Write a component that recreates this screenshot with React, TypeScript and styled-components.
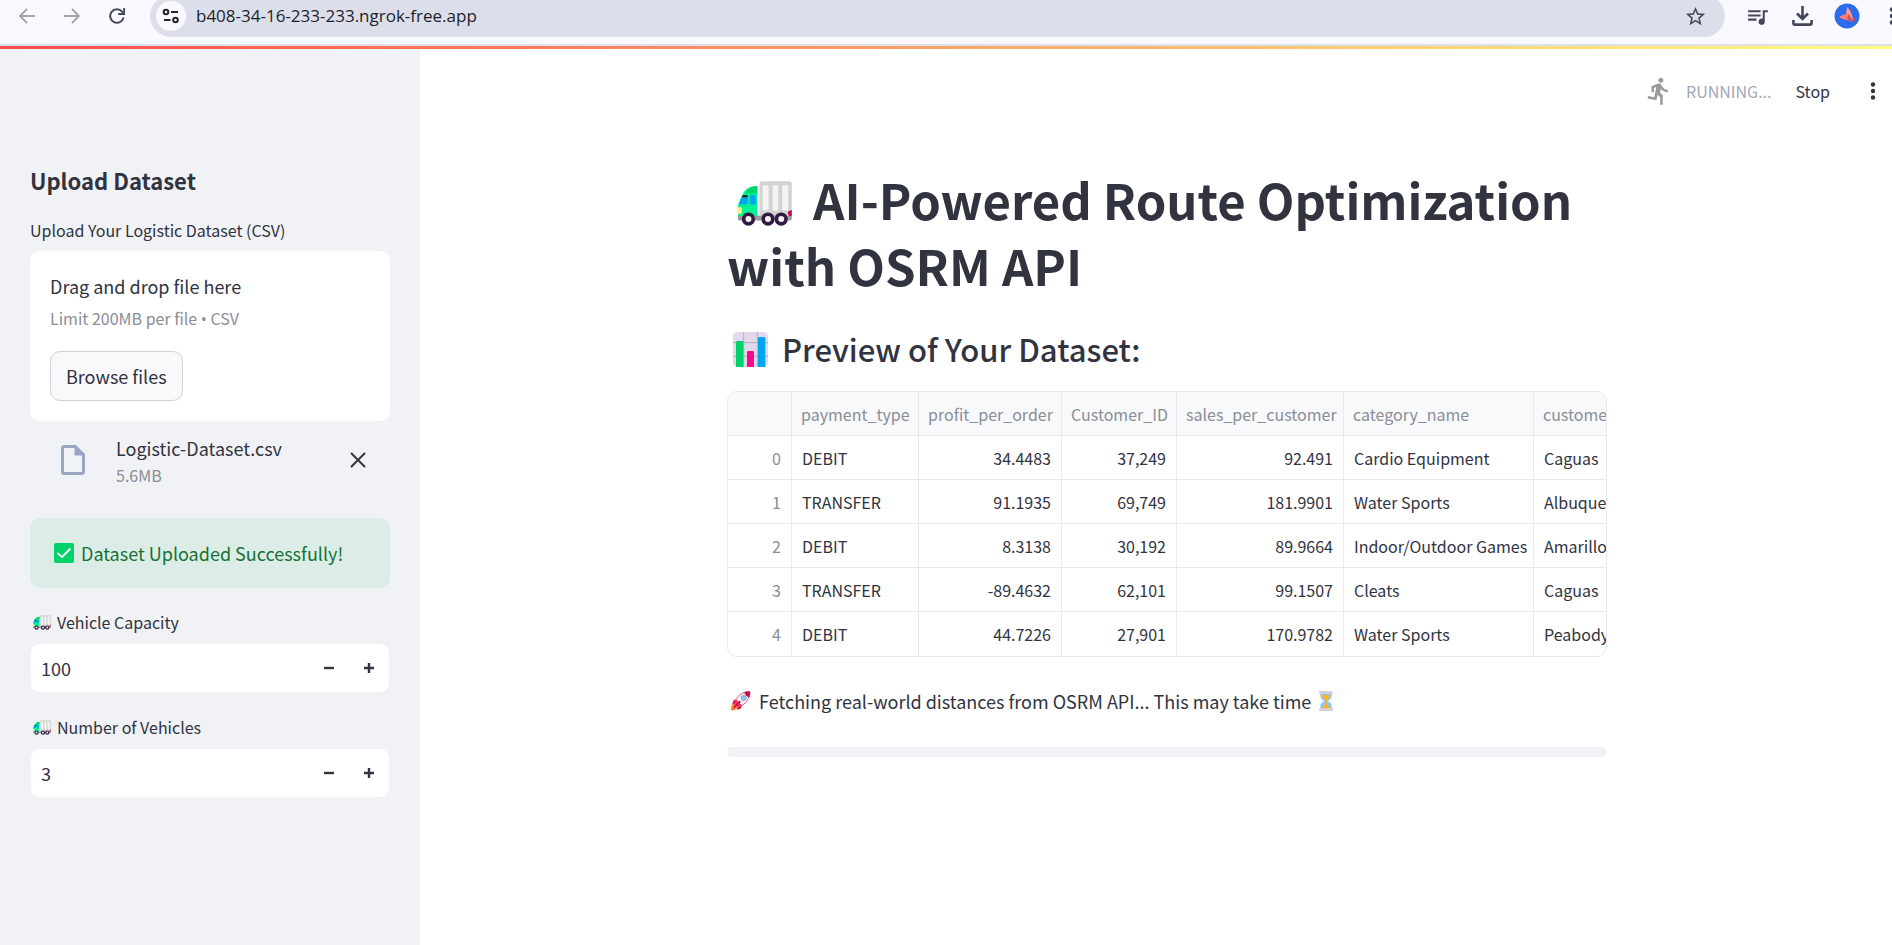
import React, { useState } from "react";
import styled, { createGlobalStyle } from "styled-components";
import { MdDirectionsRun, MdQueueMusic, MdStarBorder, MdOutlineInsertDriveFile } from "react-icons/md";

const ink = "#31333f";
const muted = "#8b8d97";
const line = "#e8e9eb";

const GlobalStyle = createGlobalStyle`
  *, *::before, *::after { box-sizing: border-box; }
  body {
    margin: 0;
    background: #fff;
    color: ${ink};
    font-family: "Noto Sans CJK SC", "Open Sans", sans-serif;
    font-size: 18px;
    line-height: 30px;
  }
  button, input { font: inherit; color: inherit; }
  button { background: none; border: 0; padding: 0; cursor: pointer; }
  svg { display: block; flex: none; }
`;

const Page = styled.div`
  display: flex;
  flex-direction: column;
  min-height: 100vh;
  overflow: hidden;
`;

/* Browser chrome */

const BrowserBar = styled.header`
  display: flex;
  align-items: flex-end;
  height: 46px;
  padding: 0 0 7px 11px;
  overflow: hidden;
  background: #f9f9ff;
  border-bottom: 2px solid #dfe1ea;
`;

const NavButtons = styled.nav`
  display: flex;
  gap: 13px;
  margin-right: 17px;
`;

const BarButton = styled.button<{ $color?: string }>`
  display: flex;
  align-items: center;
  justify-content: center;
  width: 32px;
  height: 42px;
  color: ${(p) => p.$color ?? "#434759"};
`;

const AddressBar = styled.div`
  display: flex;
  flex: 1;
  align-items: center;
  height: 42px;
  padding: 0 14px 0 6px;
  border-radius: 21px;
  background: #dcdee9;
`;

const SiteInfo = styled.button`
  display: flex;
  align-items: center;
  justify-content: center;
  width: 30px;
  height: 30px;
  border-radius: 50%;
  background: #f9f9ff;
`;

const AddressInput = styled.input`
  flex: 1;
  min-width: 0;
  margin-left: 10px;
  padding: 0;
  border: 0;
  outline: 0;
  background: transparent;
  color: #1d1f2b;
  font-family: "Open Sans", sans-serif;
  font-size: 17px;
`;

const BarActions = styled.div`
  display: flex;
  gap: 13px;
  margin: 0 -16px 0 16px;
`;

const RunStripe = styled.div`
  height: 3px;
  background: linear-gradient(90deg, #ff4b4b, #fffd80);
`;

/* App frame */

const Body = styled.div`
  display: flex;
  flex: 1;
`;

const Sidebar = styled.aside`
  flex: none;
  width: 420px;
  padding: 116px 30px 40px;
  background: #f0f2f6;
`;

const Main = styled.main`
  flex: 1;
  min-width: 0;
`;

const Toolbar = styled.div`
  display: flex;
  align-items: center;
  justify-content: flex-end;
  height: 83px;
  padding-right: 4px;
  font-size: 16px;
`;

const Status = styled.span`
  margin: 0 24px 0 12px;
  color: #a3a8b8;
`;

const MenuButton = styled.button`
  display: flex;
  align-items: center;
  justify-content: center;
  width: 30px;
  height: 30px;
  margin-left: 28px;
`;

const Content = styled.div`
  width: 100%;
  max-width: 902px;
  margin: 0 auto;
  padding: 34px 0 60px 22px;
`;

/* Sidebar parts */

const SideHeading = styled.h2`
  margin: 0 0 23px;
  font-size: 22px;
  font-weight: 600;
  line-height: 30px;
`;

const Label = styled.label`
  display: flex;
  align-items: center;
  gap: 6px;
  margin-bottom: 9px;
  font-size: 16px;
  line-height: 24px;
`;

const TruckLabel = styled(Label)`
  padding-left: 3px;
`;

const DropZone = styled.section`
  padding: 20px;
  border-radius: 10px;
  background: #fff;
`;

const Small = styled.div`
  color: ${muted};
  font-size: 16px;
  line-height: 24px;
`;

const LimitNote = styled(Small)`
  margin: 5px 0 20px;
`;

const Bullet = styled.span`
  font-family: "Open Sans", sans-serif;
`;

const BrowseButton = styled.button`
  height: 50px;
  padding: 0 15px;
  border: 1px solid #d0d1d6;
  border-radius: 10px;
  background: #f9f9fb;
`;

const FileRow = styled.div`
  display: flex;
  align-items: center;
  gap: 25px;
  margin: 12px 0 31px;
  padding: 0 17px 0 25px;
  color: #98a6c4;
`;

const FileInfo = styled.div`
  flex: 1;
  color: ${ink};
`;

const RemoveButton = styled.button`
  display: flex;
  align-items: center;
  justify-content: center;
  width: 30px;
  height: 30px;
  color: ${ink};
`;

const Success = styled.div`
  display: flex;
  align-items: center;
  gap: 7px;
  height: 70px;
  margin-bottom: 22px;
  padding: 0 24px;
  border-radius: 10px;
  background: #dcede7;
  color: #177233;
`;

const NumberBox = styled.div`
  display: flex;
  align-items: center;
  height: 50px;
  margin-bottom: 22px;
  padding-left: 10px;
  border: 1px solid #f0f2f6;
  border-radius: 10px;
  background: #fff;
`;

const NumberField = styled.input`
  flex: 1;
  min-width: 0;
  padding: 0;
  border: 0;
  outline: 0;
  background: transparent;
`;

const StepButton = styled.button`
  display: flex;
  align-items: center;
  justify-content: center;
  width: 40px;
  height: 48px;
`;

/* Main parts */

const Title = styled.h1`
  margin: 0 0 31px;
  font-size: 49px;
  font-weight: 700;
  line-height: 66px;
  svg { display: inline-block; margin: 0 9px 0 10px; vertical-align: -6px; }
`;

const Subtitle = styled.h3`
  display: flex;
  align-items: center;
  gap: 14px;
  margin: 0 0 22px;
  padding-left: 6px;
  font-size: 31px;
  font-weight: 500;
  line-height: 40px;
`;

const TableFrame = styled.div`
  overflow: hidden;
  border: 1px solid ${line};
  border-radius: 10px;
`;

const DataTable = styled.table`
  width: 1010px;
  table-layout: fixed;
  border-collapse: separate;
  border-spacing: 0;
  font-size: 16px;
  line-height: 24px;
`;

const Col = styled.col<{ $w: number }>`
  width: ${(p) => p.$w}px;
`;

const HeadCell = styled.th`
  height: 44px;
  padding: 0 9px;
  border-right: 1px solid ${line};
  border-bottom: 1px solid ${line};
  background: #f8f9fb;
  color: ${muted};
  font-weight: 400;
  text-align: left;
  white-space: nowrap;
`;

const Cell = styled.td<{ $right?: boolean; $muted?: boolean }>`
  height: 44px;
  padding: 0 10px;
  border-right: 1px solid ${line};
  border-bottom: 1px solid ${line};
  color: ${(p) => (p.$muted ? muted : ink)};
  text-align: ${(p) => (p.$right ? "right" : "left")};
  white-space: nowrap;
  tr:last-child > & { border-bottom: 0; }
`;

const Notice = styled.p`
  display: flex;
  align-items: center;
  gap: 8px;
  margin: 29px 0 31px;
  padding-left: 3px;
`;

const Progress = styled.div`
  height: 10px;
  border-radius: 5px;
  background: #f0f2f6;
`;

/* Drawings */

const Truck = ({ width, height }: { width: number; height: number }) => (
  <svg width={width} height={height} viewBox="80 62 166 136" aria-hidden="true">
    <rect x="146" y="63" width="98" height="113" rx="9" fill="#d3d3d3" />
    <rect x="156" y="75" width="18" height="76" rx="4" fill="#f4f4f4" />
    <rect x="186" y="75" width="17" height="76" rx="4" fill="#f4f4f4" />
    <rect x="215" y="75" width="18" height="76" rx="4" fill="#f4f4f4" />
    <path d="M81 167H244V175Q244 181 238 181H86Q81 181 81 176Z" fill="#9b9b9b" />
    <path d="M81 168V136L94 104Q106 78 134 78H140V168Z" fill="#00f397" />
    <path d="M104 99Q114 77 140 77V99Z" fill="#00d26a" />
    <path d="M83 133L94 108Q96 104 101 104H111V128Q111 133 106 133Z" fill="#00a6ed" />
    <path d="M93 111L97 104H110V111Z" fill="#212121" />
    <rect x="117" y="104" width="18" height="29" rx="4" fill="#00a6ed" />
    <path d="M81 141H89Q93 141 93 145V157Q93 161 89 161H81Z" fill="#fff478" />
    <path d="M244 150V168H238Q232 166 232 159T244 150Z" fill="#ca0b4a" />
    {[113, 172, 212].map((x) => (
      <g key={x}>
        <circle cx={x} cy="177" r="20" fill="#321b41" />
        <circle cx={x} cy="177" r="9" fill="#f4f4f4" />
      </g>
    ))}
  </svg>
);

const BarChart = () => (
  <svg width="35" height="35" viewBox="69 519 105 105" aria-hidden="true">
    <rect x="69" y="519" width="105" height="105" rx="14" fill="#e1d8ec" />
    <path d="M101 519V624M142 519V624M69 551H174M69 592H174" stroke="#b4acbc" strokeWidth="3" />
    <path d="M78 624V550Q78 546 82 546H96Q100 546 100 550V624Z" fill="#00d26a" />
    <path d="M111 624V580Q111 576 115 576H128Q132 576 132 580V624Z" fill="#f70a8d" />
    <path d="M144 624V538Q144 534 148 534H162Q166 534 166 538V624Z" fill="#00a6ed" />
  </svg>
);

const Rocket = () => (
  <svg width="21" height="20" viewBox="0 0 32 32" aria-hidden="true">
    <path d="M1 31Q0 22 6 20L12 26Q10 31 1 31Z" fill="#ff822d" />
    <path d="M9 13Q3 14 3 22L9 19ZM18 23Q18 29 10 30L13 23Z" fill="#ca0b4a" />
    <path d="M8 23Q5 11 20 3Q26 0 31 1Q32 7 28 13Q20 27 9 24Z" fill="#f4f4f4" stroke="#e05575" strokeWidth="1.5" />
    <path d="M22 2Q27 0 31 1Q32 5 30 10Q24 9 22 2Z" fill="#ca0b4a" />
    <path d="M7 24Q5 18 9 14L12 16Q12 19 17 21L18 23Q13 26 7 24Z" fill="#f92f60" />
    <path d="M6 26L15 17" stroke="#ca0b4a" strokeWidth="2.5" strokeLinecap="round" />
    <circle cx="21" cy="11" r="4" fill="#83cbff" stroke="#9b9b9b" strokeWidth="1.5" />
  </svg>
);

const Hourglass = () => (
  <svg width="14" height="20" viewBox="0 0 21 30" aria-hidden="true">
    <path d="M2 3H19V7Q19 12 13 15Q19 18 19 23V27H2V23Q2 18 8 15Q2 12 2 7Z" fill="#83cbff" />
    <path d="M4 6H17Q17 11 12 13V20Q16 23 17 27H4Q5 23 9 20V13Q4 11 4 6Z" fill="#ffb02e" />
    <rect x="0" y="0" width="21" height="4" rx="1" fill="#d3d3d3" />
    <rect x="0" y="26" width="21" height="4" rx="1" fill="#d3d3d3" />
  </svg>
);

const CheckMark = () => (
  <svg width="20" height="20" viewBox="0 0 20 20" aria-hidden="true">
    <rect width="20" height="20" rx="2" fill="#00d26a" />
    <path d="M4 10.5L8 14L16 6" fill="none" stroke="#f4f4f4" strokeWidth="2" strokeLinecap="round" strokeLinejoin="round" />
  </svg>
);

const Arrow = ({ flip }: { flip?: boolean }) => (
  <svg width="16" height="16" viewBox="0 0 16 16" aria-hidden="true">
    <path
      d={flip ? "M0 8H15M8 1L15 8L8 15" : "M16 8H1M8 1L1 8L8 15"}
      fill="none"
      stroke="currentColor"
      strokeWidth="1.8"
    />
  </svg>
);

const Reload = () => (
  <svg width="16" height="16" viewBox="0 0 16 16" aria-hidden="true">
    <path d="M14.6 9.5A6.8 6.8 0 1 1 13.2 3.6L14.6 5" fill="none" stroke="currentColor" strokeWidth="2" />
    <path d="M15.2 0V6H9.2" fill="none" stroke="currentColor" strokeWidth="2" />
  </svg>
);

const SiteSettings = () => (
  <svg width="18" height="16" viewBox="0 0 18 16" fill="none" stroke="#23242c" strokeWidth="2" aria-hidden="true">
    <circle cx="4" cy="4" r="2.3" />
    <path d="M9 4H16M2 12H8.5" />
    <circle cx="13.5" cy="12" r="2.3" />
  </svg>
);

const Download = () => (
  <svg width="21" height="20" viewBox="0 0 21 20" fill="none" stroke="currentColor" strokeWidth="2.6" aria-hidden="true">
    <path d="M10.5 0V13M5 7.5L10.5 13L16 7.5M1.4 14V17Q1.4 18.6 3 18.6H18Q19.6 18.6 19.6 17V14" />
  </svg>
);

const Avatar = () => (
  <svg width="26" height="26" viewBox="0 0 26 26" aria-hidden="true">
    <circle cx="13" cy="13" r="12.5" fill="#2c6bee" />
    <path d="M13 4Q18 8 19 17L12 12Z" fill="#ff9a85" />
    <path d="M5 14Q9 11 15 11L17 18L13 17Q9 17 5 14Z" fill="#ff7d6e" />
    <path d="M15 11L18 17L20 14L21 17L18 19L13 16Z" fill="#d9505c" />
  </svg>
);

const Dots = () => (
  <svg width="6" height="18" viewBox="0 0 6 18" fill="currentColor" aria-hidden="true">
    <circle cx="3" cy="2.5" r="2.2" />
    <circle cx="3" cy="9" r="2.2" />
    <circle cx="3" cy="15.5" r="2.2" />
  </svg>
);

const Cross = () => (
  <svg width="16" height="16" viewBox="0 0 16 16" aria-hidden="true">
    <path d="M1.5 1.5L14.5 14.5M14.5 1.5L1.5 14.5" stroke="currentColor" strokeWidth="1.9" strokeLinecap="round" />
  </svg>
);

const StepSign = ({ plus }: { plus?: boolean }) => (
  <svg width="10" height="10" viewBox="0 0 10 10" aria-hidden="true">
    <path d={plus ? "M0 5H10M5 0V10" : "M0 5H10"} stroke="currentColor" strokeWidth="2.4" />
  </svg>
);

/* Content */

const columns = [
  { name: "", width: 64, right: true },
  { name: "payment_type", width: 127 },
  { name: "profit_per_order", width: 143, right: true },
  { name: "Customer_ID", width: 115, right: true },
  { name: "sales_per_customer", width: 167, right: true },
  { name: "category_name", width: 190 },
  { name: "customer_city", width: 204 },
];

const rows = [
  ["0", "DEBIT", "34.4483", "37,249", "92.491", "Cardio Equipment", "Caguas"],
  ["1", "TRANSFER", "91.1935", "69,749", "181.9901", "Water Sports", "Albuquerque"],
  ["2", "DEBIT", "8.3138", "30,192", "89.9664", "Indoor/Outdoor Games", "Amarillo"],
  ["3", "TRANSFER", "-89.4632", "62,101", "99.1507", "Cleats", "Caguas"],
  ["4", "DEBIT", "44.7226", "27,901", "170.9782", "Water Sports", "Peabody"],
];

function NumberInput({ id, label, initial }: { id: string; label: string; initial: number }) {
  const [value, setValue] = useState(initial);
  return (
    <div>
      <TruckLabel htmlFor={id}>
        <Truck width={18} height={15} />
        {label}
      </TruckLabel>
      <NumberBox>
        <NumberField
          id={id}
          inputMode="numeric"
          value={value}
          onChange={(e) => setValue(Number(e.target.value) || 0)}
        />
        <StepButton type="button" aria-label={`Decrease ${label}`} onClick={() => setValue(value - 1)}>
          <StepSign />
        </StepButton>
        <StepButton type="button" aria-label={`Increase ${label}`} onClick={() => setValue(value + 1)}>
          <StepSign plus />
        </StepButton>
      </NumberBox>
    </div>
  );
}

export default function App() {
  return (
    <Page>
      <GlobalStyle />
      <BrowserBar>
        <NavButtons>
          <BarButton aria-label="Back" $color="#a5a6ac"><Arrow /></BarButton>
          <BarButton aria-label="Forward" $color="#a5a6ac"><Arrow flip /></BarButton>
          <BarButton aria-label="Reload"><Reload /></BarButton>
        </NavButtons>
        <AddressBar>
          <SiteInfo aria-label="Site information"><SiteSettings /></SiteInfo>
          <AddressInput aria-label="Address" defaultValue="b408-34-16-233-233.ngrok-free.app" />
          <BarButton aria-label="Bookmark"><MdStarBorder size={23} /></BarButton>
        </AddressBar>
        <BarActions>
          <BarButton aria-label="Media"><MdQueueMusic size={25} /></BarButton>
          <BarButton aria-label="Downloads"><Download /></BarButton>
          <BarButton aria-label="Profile"><Avatar /></BarButton>
          <BarButton aria-label="Browser menu"><Dots /></BarButton>
        </BarActions>
      </BrowserBar>
      <RunStripe />
      <Body>
        <Sidebar>
          <SideHeading>Upload Dataset</SideHeading>
          <Label htmlFor="browse">Upload Your Logistic Dataset (CSV)</Label>
          <DropZone>
            <div>Drag and drop file here</div>
            <LimitNote>Limit 200MB per file <Bullet>•</Bullet> CSV</LimitNote>
            <BrowseButton id="browse" type="button">Browse files</BrowseButton>
          </DropZone>
          <FileRow>
            <MdOutlineInsertDriveFile size={36} />
            <FileInfo>
              Logistic-Dataset.csv
              <Small>5.6MB</Small>
            </FileInfo>
            <RemoveButton type="button" aria-label="Remove file"><Cross /></RemoveButton>
          </FileRow>
          <Success role="status">
            <CheckMark />
            Dataset Uploaded Successfully!
          </Success>
          <NumberInput id="capacity" label="Vehicle Capacity" initial={100} />
          <NumberInput id="vehicles" label="Number of Vehicles" initial={3} />
        </Sidebar>
        <Main>
          <Toolbar>
            <MdDirectionsRun size={30} color="#999a9a" />
            <Status>RUNNING...</Status>
            <button type="button">Stop</button>
            <MenuButton type="button" aria-label="Main menu"><Dots /></MenuButton>
          </Toolbar>
          <Content>
            <Title><Truck width={56} height={45} /> AI-Powered Route Optimization with OSRM API</Title>
            <Subtitle><BarChart />Preview of Your Dataset:</Subtitle>
            <TableFrame>
              <DataTable>
                <colgroup>
                  {columns.map((c) => <Col key={c.name} $w={c.width} />)}
                </colgroup>
                <thead>
                  <tr>{columns.map((c) => <HeadCell key={c.name} scope="col">{c.name}</HeadCell>)}</tr>
                </thead>
                <tbody>
                  {rows.map((row) => (
                    <tr key={row[0]}>
                      {row.map((value, i) => (
                        <Cell key={i} $right={columns[i].right} $muted={i === 0}>{value}</Cell>
                      ))}
                    </tr>
                  ))}
                </tbody>
              </DataTable>
            </TableFrame>
            <Notice>
              <Rocket />
              Fetching real-world distances from OSRM API... This may take time
              <Hourglass />
            </Notice>
            <Progress role="progressbar" aria-label="Fetching distances" aria-valuenow={0} />
          </Content>
        </Main>
      </Body>
    </Page>
  );
}
